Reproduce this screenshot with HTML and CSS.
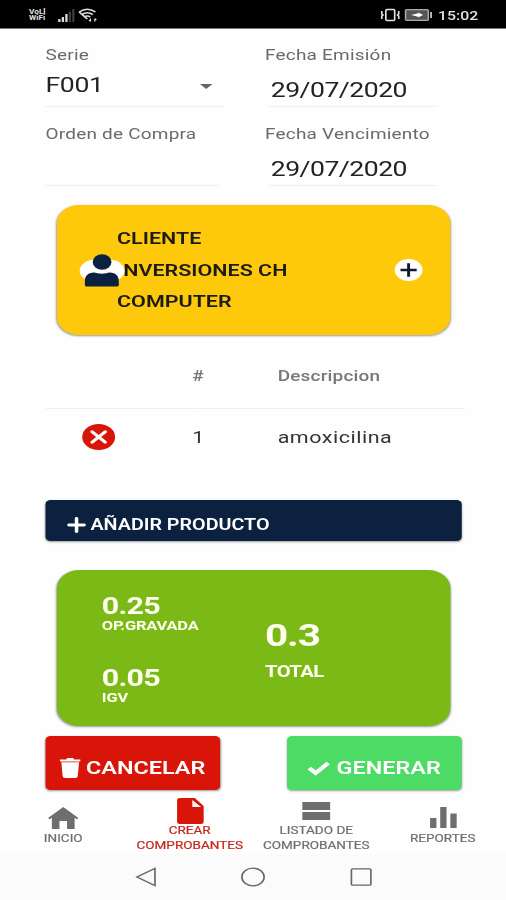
FILE: index.html
```html
<!DOCTYPE html>
<html lang="es">
<head>
    <meta charset="UTF-8">
    <meta name="viewport" content="width=device-width, initial-scale=1.0">
    <title>Crear comprobantes</title>
    <link rel="stylesheet" href="styles.css">
</head>
<body>
<div class="screen">

    <!-- Barra de estado -->
    <header class="status">
        <div class="status-left">
            <div class="vowifi"><span>VoLl</span><span>WiFi</span></div>
            <svg class="signal" width="13" height="13" viewBox="0 0 13 13">
                <path d="M0 10h1.8v3H0zM2.8 8h1.8v5H2.8zM5.6 5h1.8v8H5.6z" fill="#ddd"/>
                <path d="M8.4 2.5h1.6V13H8.4zM11.2 0h1.6v13h-1.6z" fill="#444"/>
            </svg>
            <svg class="wifi" width="15" height="14" viewBox="0 0 15 14" fill="none" stroke="#ddd" stroke-width="1.5">
                <path d="M.6 4Q7-1.6 13.4 4M2.6 6.6Q7 2.8 11.4 6.6M4.6 9Q7 7 9.4 9M.6 4l6.4 7"/>
                <path d="M9.5 10.5v3M8.3 12l1.2 1.5M13 13.5v-3M14.2 12L13 10.5" stroke-width="1"/>
            </svg>
        </div>
        <div class="status-right">
            <svg width="15" height="14" viewBox="0 0 15 14" fill="none" stroke="#e4e4e4" stroke-width="1.3">
                <rect x="4" y="1.5" width="7" height="11" rx="1"/>
                <path d="M.8 3v3l1 1-1 1v3M14.2 3v3l-1 1 1 1v3"/>
            </svg>
            <svg width="22" height="12" viewBox="0 0 22 12">
                <rect x=".6" y=".6" width="18" height="10.8" rx="1" fill="#555" stroke="#aaa" stroke-width="1.2"/>
                <path d="M5 6l4-1.3V4.500h1.500V3.500l4 2.500-4 2.500V7.500H9v-.2z" fill="#fff"/>
                <path d="M20 3h1.5v6H20z" fill="#bbb"/>
            </svg>
            <span class="clock">15:02</span>
        </div>
    </header>

    <main class="content">
        <!-- Datos del comprobante -->
        <form class="form">
            <div class="field">
                <label>Serie</label>
                <div class="value select"><span>F001</span><i class="caret"></i></div>
            </div>
            <div class="field">
                <label>Fecha Emisión</label>
                <div class="value date"><span>29/07/2020</span></div>
            </div>
            <div class="field">
                <label>Orden de Compra</label>
                <div class="value empty"></div>
            </div>
            <div class="field">
                <label>Fecha Vencimiento</label>
                <div class="value date"><span>29/07/2020</span></div>
            </div>
        </form>

        <!-- Cliente -->
        <section class="card client">
            <svg class="avatar" width="34" height="34" viewBox="0 0 34 34">
                <rect x="-1" y="6.5" width="35.5" height="22.5" rx="13" ry="11.25" fill="#fff"/>
                <ellipse cx="16.7" cy="9" rx="7.4" ry="7.8" fill="#0c2040"/>
                <path d="M4.500 33.500q-1.400 0-1.400-1.500V28c0-5 2.600-8.500 7-8.500 2.400 0 3.400 1.300 6.400 1.300s4-1.300 6.400-1.300c4.400 0 7 3.500 7 8.500v4q0 1.500-1.400 1.500z" fill="#0c2040"/>
            </svg>
            <p>CLIENTE<br>INVERSIONES CH<br>COMPUTER</p>
            <svg class="add" width="22" height="22" viewBox="0 0 22 22">
                <circle cx="11" cy="11" r="11" fill="#fff"/>
                <path d="M4.600 11h12.800M11 4.300v13.400" stroke="#101a35" stroke-width="2.300"/>
            </svg>
        </section>

        <!-- Productos -->
        <table class="products">
            <tr>
                <th></th>
                <th>#</th>
                <th>Descripcion</th>
            </tr>
            <tr>
                <td class="remove">
                    <svg width="26" height="26" viewBox="0 0 26 26">
                        <circle cx="13" cy="13" r="13" fill="#d91408"/>
                        <path d="M7.800 7.800l10.400 10.400M18.200 7.800L7.800 18.200" stroke="#fff" stroke-width="2.800" stroke-linecap="round"/>
                    </svg>
                </td>
                <td>1</td>
                <td>amoxicilina</td>
            </tr>
        </table>

        <div class="btn add-product">
            <svg width="14" height="16" viewBox="0 0 14 16">
                <path d="M1.500 8h12M7.500 1.500v13" stroke="#fff" stroke-width="2.800" stroke-linecap="round"/>
            </svg>
            <span>AÑADIR PRODUCTO</span>
        </div>

        <!-- Totales -->
        <section class="card totals">
            <div class="amounts">
                <div class="amount"><b>0.25</b><small>OP.GRAVADA</small></div>
                <div class="amount"><b>0.05</b><small>IGV</small></div>
            </div>
            <div class="total"><b>0.3</b><small>TOTAL</small></div>
        </section>

        <div class="actions">
            <div class="btn cancel">
                <svg width="17" height="20" viewBox="0 0 17 20" fill="#fff">
                    <path d="M.5 1.500h4.800L6.300 0h4.400l1 1.500h4.800v2H.5zM1.500 4.200h14l-1 13.800q-.2 2-2 2h-8q-1.800 0-2-2z"/>
                </svg>
                <span>CANCELAR</span>
            </div>
            <div class="btn generate">
                <svg width="18" height="16" viewBox="0 0 18 16">
                    <path d="M1.500 8l5 5L16.500 3" fill="none" stroke="#fff" stroke-width="3.800"/>
                </svg>
                <span>GENERAR</span>
            </div>
        </div>
    </main>

    <!-- Pestañas -->
    <nav class="tabs">
        <div class="tab">
            <svg width="24" height="22" viewBox="0 0 24 22" fill="#6e6e6e">
                <path d="M12 0l12 11-1.300 1.300-1.700-1.500V22h-6v-8H9v8H3V10.800l-1.700 1.500L0 11z"/>
            </svg>
            <span>INICIO</span>
        </div>
        <div class="tab active">
            <svg width="21" height="26" viewBox="0 0 21 26">
                <path d="M2 0h12l7 8v16q0 2-2 2H2q-2 0-2-2V2q0-2 2-2zM12 2v7h7z" fill="#d91408" fill-rule="evenodd"/>
            </svg>
            <span>CREAR<br>COMPROBANTES</span>
        </div>
        <div class="tab list">
            <svg width="22" height="18" viewBox="0 0 22 18" fill="#6e6e6e">
                <path d="M0 0h22v8H0zM0 10h22v8H0z"/>
            </svg>
            <span>LISTADO DE<br>COMPROBANTES</span>
        </div>
        <div class="tab">
            <svg width="21" height="21" viewBox="0 0 21 21" fill="#6e6e6e">
                <path d="M0 11h5v10H0zM8 0h5v21H8zM16 6.500h5V21h-5z"/>
            </svg>
            <span>REPORTES</span>
        </div>
    </nav>

    <!-- Botones del sistema -->
    <footer class="system">
        <svg width="17" height="20" viewBox="0 0 17 20"><path d="M15.500 1.500v17L1.200 10z"/></svg>
        <svg width="20" height="20" viewBox="0 0 20 20"><circle cx="10" cy="10" r="8.800"/></svg>
        <svg width="17" height="18" viewBox="0 0 17 18"><rect x=".8" y=".8" width="15.400" height="16.400" rx="1"/></svg>
    </footer>
</div>
</body>
</html>
```
FILE: styles.css
```css
body {
    margin: 0;
    overflow: hidden;
    background-color: #fefefe;
    font-family: Roboto, Arial, sans-serif;
}
/* pantalla de 400px ensanchada a 506px */
.screen {
    display: flex;
    flex-direction: column;
    width: 400px;
    height: 900px;
    transform: scaleX(1.265);
    transform-origin: 0 0;
}
svg {
    display: block;
    flex: none;
    overflow: visible;
}

.status {
    display: flex;
    justify-content: space-between;
    box-sizing: border-box;
    height: 29px;
    padding: 0 22px 0 23px;
    background-color: #000;
    border-bottom: 1px solid #777;
    color: #e4e4e4;
}
.status-left, .status-right {
    display: flex;
    align-items: center;
    padding-top: 2px;
}
.vowifi {
    display: flex;
    flex-direction: column;
    width: 23px;
    font-size: 6.5px;
    font-weight: 700;
    line-height: 6.5px;
}
.wifi {
    margin-left: 3px;
}
.status-right {
    gap: 4px;
}
.clock {
    font-size: 12.5px;
    font-weight: 500;
}

.content {
    padding: 16px 35px 0 36px;
}
.form {
    display: grid;
    grid-template-columns: 173.5px 1fr;
    row-gap: 17px;
}
.field {
    height: 62px;
}
.field label {
    display: block;
    height: 20px;
    font-size: 15px;
    line-height: 20px;
    letter-spacing: 0.17px;
    color: #6a6a6a;
    white-space: nowrap;
}
.value {
    display: flex;
    box-sizing: border-box;
    width: 141px;
    height: 42px;
    border-bottom: 1px solid #f0f0f0;
    color: #222;
    line-height: 41px;
}
.select {
    justify-content: space-between;
    font-size: 21px;
    letter-spacing: -0.3px;
}
.caret {
    width: 0;
    height: 0;
    margin: 19px 9px 0 0;
    border: 5px solid transparent;
    border-top-color: #666;
    border-bottom: 0;
}
.date {
    width: 134px;
    margin-left: 2px;
    padding: 4px 0 0 2.5px;
    font-size: 21px;
    line-height: 42px;
    letter-spacing: -0.4px;
}
.empty {
    width: 138px;
}

.card {
    display: flex;
    box-sizing: border-box;
    margin: 0 9px 0 8.5px;
    border-radius: 18px;
    box-shadow: 0 1px 2px rgba(0, 0, 0, 0.4);
}
.client {
    align-items: center;
    height: 130px;
    margin-top: 19px;
    padding: 0 22px 0 19px;
    background-color: #fdc90a;
}
.client p {
    flex: 1;
    margin: 1px 0 0 -5px;
    color: #1b1c18;
    font-size: 17px;
    font-weight: 600;
    line-height: 31.5px;
}
.avatar {
    position: relative;
    z-index: 1;
}

.products {
    width: 331px;
    margin-top: 9px;
    border-collapse: collapse;
    table-layout: fixed;
}
.products th, .products td {
    height: 64px;
    padding: 0;
    text-align: left;
    letter-spacing: 0.15px;
}
.products th {
    border-bottom: 1px solid #f0f0f0;
    color: #777;
    font-size: 15px;
    font-weight: 500;
}
.products td {
    height: 56px;
    color: #333;
    font-size: 17px;
    letter-spacing: 0.4px;
}
.products th:first-child {
    width: 116px;
}
.products th:nth-child(2) {
    width: 67.5px;
}
.remove svg {
    margin-left: 29px;
}

.btn {
    display: flex;
    align-items: center;
    box-sizing: border-box;
    border-radius: 4px;
    box-shadow: 0 1px 2px rgba(0, 0, 0, 0.4);
    color: #fff;
    font-weight: 600;
}
.add-product {
    height: 41px;
    margin-top: 35px;
    padding: 9px 0 0 17px;
    gap: 4.5px;
    background-color: #0c2040;
    font-size: 15.6px;
}

.totals {
    height: 156px;
    margin-top: 29px;
    padding: 22px 0 0 36px;
    background-color: #7bba16;
    color: #fffff0;
}
.totals b, .totals small {
    display: block;
    font-weight: 700;
}
.amounts {
    width: 129px;
}
.amount {
    height: 72px;
}
.amount b {
    font-size: 24px;
    line-height: 28px;
    letter-spacing: -0.6px;
}
.amount small {
    font-size: 13px;
    line-height: 12px;
    letter-spacing: -0.15px;
}
.total b {
    margin-top: 23px;
    font-size: 32px;
    line-height: 40px;
    letter-spacing: -0.9px;
}
.total small {
    margin-top: 7px;
    font-size: 16px;
    line-height: 20px;
    letter-spacing: -0.5px;
}

.actions {
    display: flex;
    justify-content: space-between;
    margin-top: 10px;
}
.actions .btn {
    width: 138px;
    height: 54px;
    padding-top: 9px;
    font-size: 18.5px;
}
.actions .cancel {
    padding-left: 11px;
    gap: 4px;
    background-color: #d91408;
}
.actions .generate {
    padding-left: 16px;
    gap: 5px;
    background-color: #4cdb65;
}

.tabs {
    display: flex;
    height: 64px;
}
.tab {
    display: flex;
    flex-direction: column;
    align-items: center;
    box-sizing: border-box;
    width: 100px;
    padding-top: 17px;
    color: #6e6e6e;
    font-size: 10.7px;
    line-height: 14.5px;
    text-align: center;
    -webkit-text-stroke: 0.2px;
}
.tab span {
    margin-top: 3px;
}
.tab:last-child span {
    margin-top: 4px;
}
.tab.active {
    padding-top: 8px;
    color: #c3281e;
}
.tab.active span {
    margin-top: 0;
}
.tab.list {
    padding-top: 12px;
}
.tab.list span {
    margin-top: 4px;
}

.system {
    display: flex;
    flex: 1;
    justify-content: center;
    align-items: center;
    gap: 66.5px;
    background-color: #fbfbfb;
}
.system svg {
    fill: none;
    stroke: #666;
    stroke-width: 1.3;
}
```
